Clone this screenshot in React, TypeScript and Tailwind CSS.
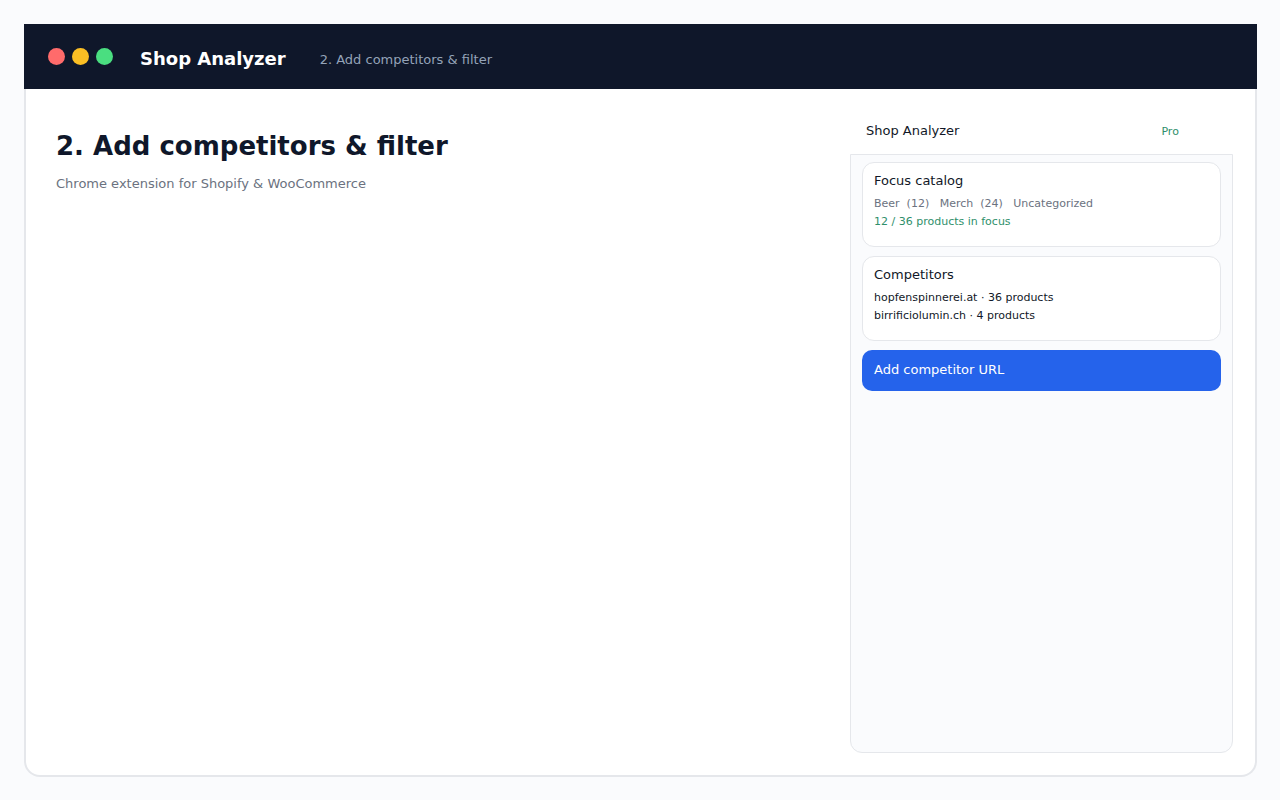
export default function App() {
  return (
    <div className="min-h-screen bg-[#fafbfd] p-6 font-['DejaVu_Sans',sans-serif]">
      <div className="h-[753px] w-[1233px] flex flex-col">
        {/* Title bar */}
        <header className="h-[65px] shrink-0 bg-[#0f172a] flex items-start pl-6">
          <div className="flex gap-[7px] mt-[24px]">
            <span className="w-[17px] h-[17px] rounded-full bg-[#ff6b6b]" />
            <span className="w-[17px] h-[17px] rounded-full bg-[#fbbf24]" />
            <span className="w-[17px] h-[17px] rounded-full bg-[#4ade80]" />
          </div>
          <h2 className="ml-[27px] mt-[23px] text-[18px] leading-[23px] font-bold text-white">
            Shop Analyzer
          </h2>
          <span className="ml-[34px] mt-[28px] text-[13px] leading-4 text-[#94a3b8]">
            2. Add competitors &amp; filter
          </span>
        </header>

        {/* Body */}
        <div className="flex-1 flex bg-white border-2 border-t-0 border-[#e5e7eb] rounded-b-2xl">
          <section className="flex-1 pl-[30px] pt-[40px]">
            <h1 className="text-[26px] leading-[34px] font-bold text-[#0f172a]">
              2. Add competitors &amp; filter
            </h1>
            <p className="mt-[13px] text-[13px] leading-4 text-[#6b7280]">
              Chrome extension for Shopify &amp; WooCommerce
            </p>
          </section>

          <aside className="w-[383px] mr-[22px] mb-[22px] flex flex-col">
            <div className="h-[65px] shrink-0 flex items-start pl-[16px] pt-[34px]">
              <span className="text-[13px] leading-4 text-[#111827]">Shop Analyzer</span>
              <span className="ml-[202px] mt-[1px] text-[11px] leading-4 text-[#2f8f6b]">Pro</span>
            </div>
            <div className="flex-1 bg-[#fafbfd] border border-[#e5e7eb] rounded-b-xl px-[11px] pt-[7px] flex flex-col gap-[9px]">
              <div className="h-[85px] bg-white border border-[#e5e7eb] rounded-xl px-[11px] pt-[10px]">
                <p className="text-[13px] leading-4 text-[#111827]">Focus catalog</p>
                <p className="mt-[8px] text-[11px] leading-[14px] text-[#6b7280] whitespace-pre">
                  {"Beer  (12)   Merch  (24)   Uncategorized"}
                </p>
                <p className="mt-[4px] text-[11px] leading-[14px] text-[#2f8f6b]">
                  12 / 36 products in focus
                </p>
              </div>
              <div className="h-[85px] bg-white border border-[#e5e7eb] rounded-xl px-[11px] pt-[10px]">
                <p className="text-[13px] leading-4 text-[#111827]">Competitors</p>
                <p className="mt-[8px] text-[11px] leading-[14px] text-[#111827]">
                  hopfenspinnerei.at · 36 products
                </p>
                <p className="mt-[4px] text-[11px] leading-[14px] text-[#111827]">
                  birrificiolumin.ch · 4 products
                </p>
              </div>
              <button className="h-[41px] bg-[#2563eb] rounded-[10px] px-[12px] pb-[1px] text-left text-[13px] leading-4 text-white">
                Add competitor URL
              </button>
            </div>
          </aside>
        </div>
      </div>
    </div>
  );
}
